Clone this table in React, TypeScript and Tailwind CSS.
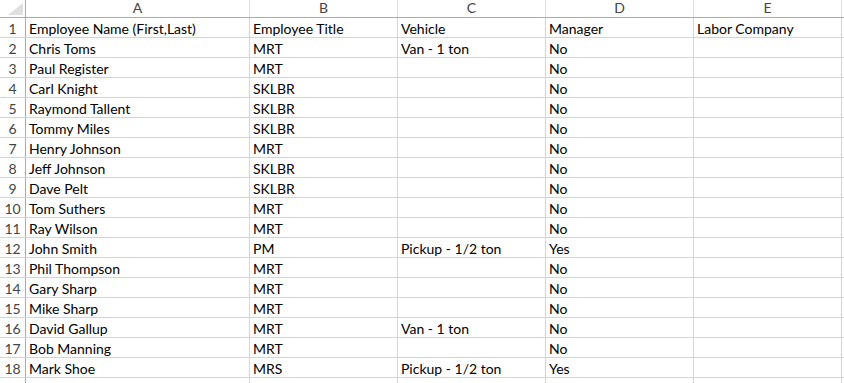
import React from 'react';

type Row = { name: string; title: string; vehicle: string; manager: string; company: string };

const rows: Row[] = [
  { name: 'Employee Name (First,Last)', title: 'Employee Title', vehicle: 'Vehicle', manager: 'Manager', company: 'Labor Company' },
  { name: 'Chris Toms', title: 'MRT', vehicle: 'Van - 1 ton', manager: 'No', company: '' },
  { name: 'Paul Register', title: 'MRT', vehicle: '', manager: 'No', company: '' },
  { name: 'Carl Knight', title: 'SKLBR', vehicle: '', manager: 'No', company: '' },
  { name: 'Raymond Tallent', title: 'SKLBR', vehicle: '', manager: 'No', company: '' },
  { name: 'Tommy Miles', title: 'SKLBR', vehicle: '', manager: 'No', company: '' },
  { name: 'Henry Johnson', title: 'MRT', vehicle: '', manager: 'No', company: '' },
  { name: 'Jeff Johnson', title: 'SKLBR', vehicle: '', manager: 'No', company: '' },
  { name: 'Dave Pelt', title: 'SKLBR', vehicle: '', manager: 'No', company: '' },
  { name: 'Tom Suthers', title: 'MRT', vehicle: '', manager: 'No', company: '' },
  { name: 'Ray Wilson', title: 'MRT', vehicle: '', manager: 'No', company: '' },
  { name: 'John Smith', title: 'PM', vehicle: 'Pickup - 1/2 ton', manager: 'Yes', company: '' },
  { name: 'Phil Thompson', title: 'MRT', vehicle: '', manager: 'No', company: '' },
  { name: 'Gary Sharp', title: 'MRT', vehicle: '', manager: 'No', company: '' },
  { name: 'Mike Sharp', title: 'MRT', vehicle: '', manager: 'No', company: '' },
  { name: 'David Gallup', title: 'MRT', vehicle: 'Van - 1 ton', manager: 'No', company: '' },
  { name: 'Bob Manning', title: 'MRT', vehicle: '', manager: 'No', company: '' },
  { name: 'Mark Shoe', title: 'MRS', vehicle: 'Pickup - 1/2 ton', manager: 'Yes', company: '' },
];

const Cell: React.FC<{ w: string; children?: React.ReactNode }> = ({ w, children }) => (
  <div className={`${w} h-full shrink-0 border-r border-[#d4d4d4] pl-[3px] pt-[3px] whitespace-nowrap overflow-hidden`}>
    {children}
  </div>
);

const App: React.FC = () => {
  return (
    <div className="w-[844px] h-[383px] overflow-hidden bg-white text-[14px] text-black" style={{ fontFamily: 'Lato, "Liberation Sans", sans-serif' }}>
      {/* column letters */}
      <div className="flex h-[18px] border-b border-[#ababab] text-[#444] text-[14px] leading-[16px]">
        <div className="w-[26px] shrink-0 border-r border-[#ababab] relative">
          <svg className="absolute left-[8px] top-[3px]" width="15" height="12" viewBox="0 0 15 12">
            <polygon points="15,0 15,12 0,12" fill="#dfdfdf" />
          </svg>
        </div>
        {[
          ['A', 'w-[224px]'],
          ['B', 'w-[148px]'],
          ['C', 'w-[148px]'],
          ['D', 'w-[148px]'],
          ['E', 'w-[148px]'],
        ].map(([l, w]) => (
          <div key={l} className={`${w} shrink-0 border-r border-[#e1e1e1] text-center`}>{l}</div>
        ))}
      </div>

      {rows.map((r, i) => (
        <div key={i} className="flex h-[20px] border-b border-[#d4d4d4] leading-[16px]">
          <div className="w-[26px] shrink-0 border-r border-[#ababab] text-center text-[#444] pt-[3px]">{i + 1}</div>
          <Cell w="w-[224px]">{r.name}</Cell>
          <Cell w="w-[148px]">{r.title}</Cell>
          <Cell w="w-[148px]">{r.vehicle}</Cell>
          <Cell w="w-[148px]">{r.manager}</Cell>
          <Cell w="w-[148px]">{r.company}</Cell>
        </div>
      ))}

      <div className="flex h-[20px] leading-[16px]">
        <div className="w-[26px] shrink-0 border-r border-[#ababab]" />
        <Cell w="w-[224px]" />
        <Cell w="w-[148px]" />
        <Cell w="w-[148px]" />
        <Cell w="w-[148px]" />
        <Cell w="w-[148px]" />
      </div>
    </div>
  );
};

export default App;
